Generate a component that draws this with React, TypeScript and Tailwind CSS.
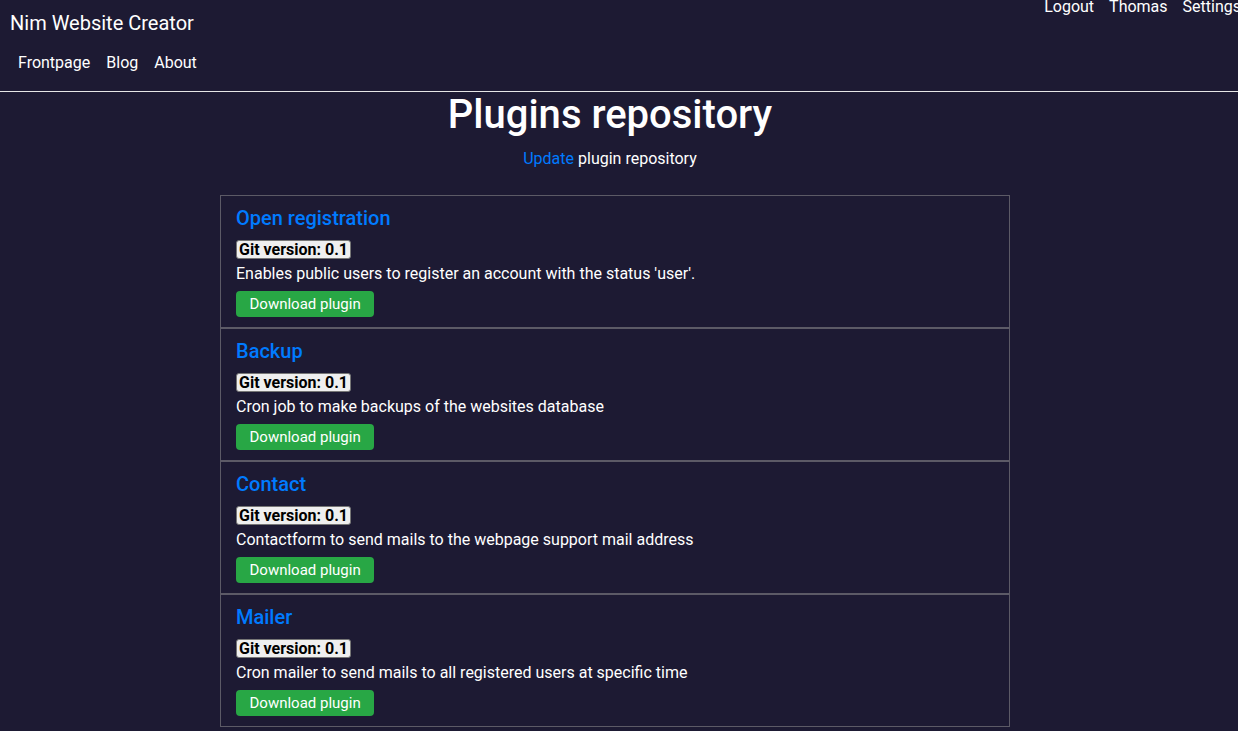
import React from 'react'

const PLUGINS = [
  { name: 'Open registration', desc: "Enables public users to register an account with the status 'user'." },
  { name: 'Backup', desc: 'Cron job to make backups of the websites database' },
  { name: 'Contact', desc: 'Contactform to send mails to the webpage support mail address' },
  { name: 'Mailer', desc: 'Cron mailer to send mails to all registered users at specific time' },
]

export default function App() {
  return (
    <div
      className="min-h-screen w-full overflow-hidden bg-[#1d1a33] text-white"
      style={{ fontFamily: 'Roboto, "Liberation Sans", sans-serif' }}
    >
      <header className="border-b border-[#e6e6e6]">
        <div className="flex justify-between">
          <div className="pl-[10px]">
            <div className="pt-[9px] text-[20px] leading-[28px]">Nim Website Creator</div>
            <nav className="flex gap-[16px] pl-[8px] pt-[16px] pb-[18px] text-[16px] leading-[20px]">
              <span>Frontpage</span>
              <span>Blog</span>
              <span>About</span>
            </nav>
          </div>
          <nav className="-mt-[3px] -mr-[3px] flex gap-[15px] text-[16px] leading-[20px]">
            <span>Logout</span>
            <span>Thomas</span>
            <span>Settings</span>
          </nav>
        </div>
      </header>

      <main className="flex w-[1220px] flex-col items-center">
        <h1 className="text-[40px] font-medium leading-[46px]">Plugins repository</h1>
        <p className="mt-[11px] text-[16px] leading-[20px]">
          <span className="text-[#007bff]">Update</span> plugin repository
        </p>

        <div className="mt-[26px] ml-[10px] flex w-[790px] flex-col">
          {PLUGINS.map((p) => (
            <div key={p.name} className="h-[133px] border border-[#5c5a66] px-[15px] pt-[8px]">
              <h2 className="text-[20px] font-medium leading-[28px] text-[#007bff]">{p.name}</h2>
              <div className="mt-[8px] h-[19px] w-fit rounded-[3px] border border-[#767676] bg-[#efefef] px-[2px] text-[16px] font-bold leading-[17px] text-black">
                Git version: 0.1
              </div>
              <p className="mt-[4px] text-[16px] leading-[22px]">{p.desc}</p>
              <button className="mt-[6px] block h-[26px] rounded-[4px] bg-[#28a745] px-[13.5px] text-[15px] leading-[26px] text-white">
                Download plugin
              </button>
            </div>
          ))}
        </div>
      </main>
    </div>
  )
}
